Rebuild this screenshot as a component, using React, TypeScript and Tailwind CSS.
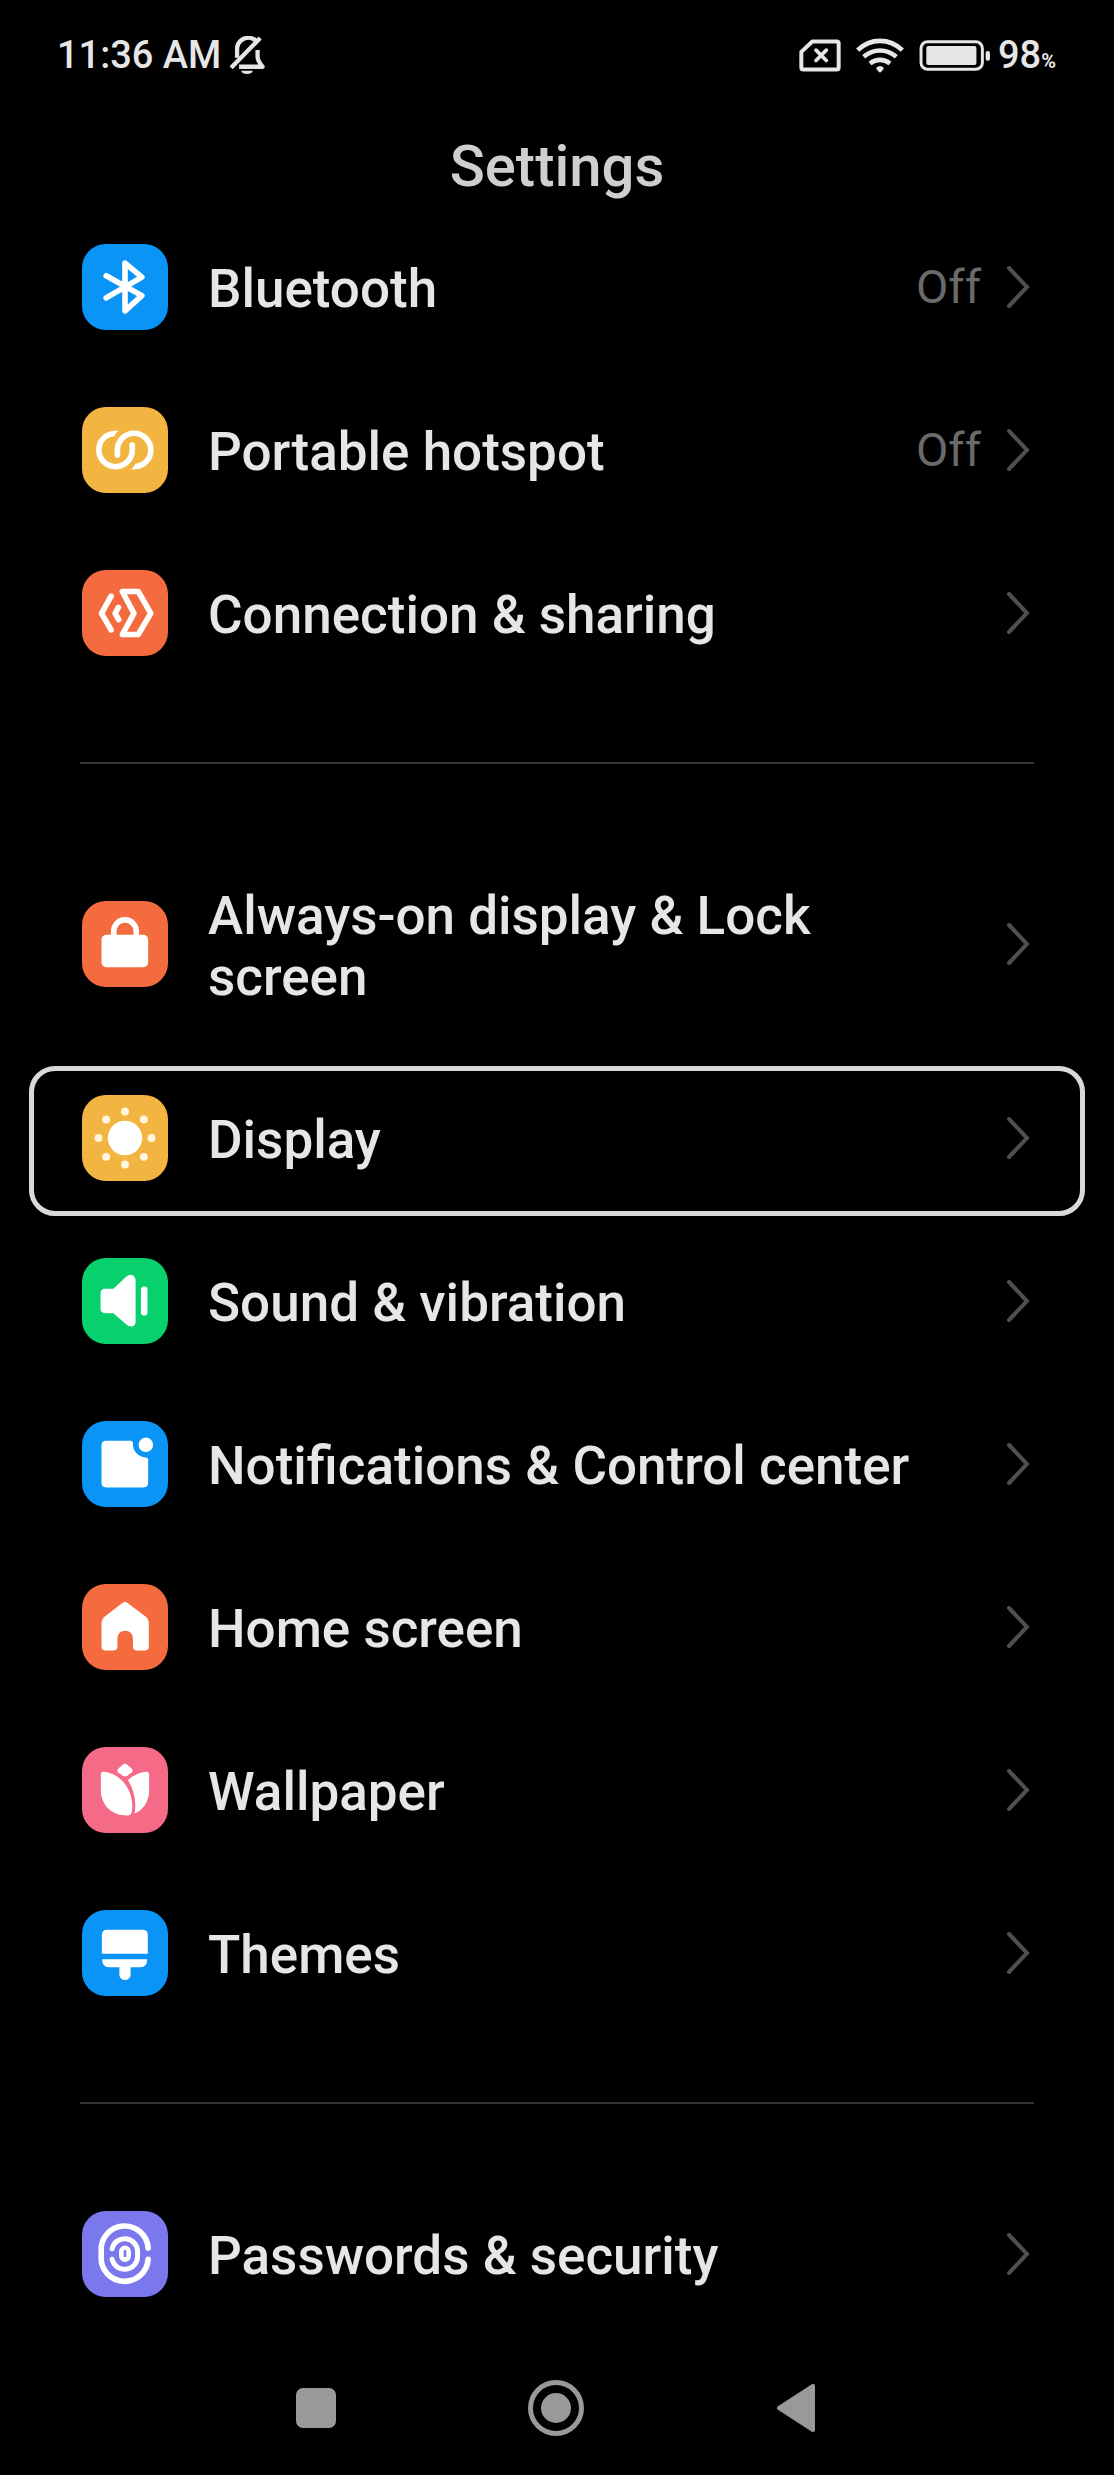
import type { ReactNode } from "react";

type Item = {
  label: string;
  tile: string;
  glyph: ReactNode;
  value?: string;
  focused?: boolean;
};

const stroke = {
  fill: "none",
  stroke: "currentColor",
  strokeWidth: 17,
  strokeLinecap: "round",
  strokeLinejoin: "round",
} as const;

const bluetooth = <path {...stroke} d="M73 96L181 156L130 202V58L181 100L73 163" />;

const hotspotHalf = (
  <>
    <path
      {...stroke}
      strokeLinecap="butt"
      d="M98 80C70 82 51 103 51 130A50.500 50.500 0 0 0 152 130V114"
    />
    <path d="M96 71.500L111 71Q103 77 96 89Z" />
    <circle cx="152" cy="115" r="8.500" />
  </>
);

const hotspot = (
  <>
    <g>{hotspotHalf}</g>
    <g transform="rotate(180 129.500 130)">{hotspotHalf}</g>
  </>
);

const connection = (
  <g {...stroke}>
    <path d="M88 79L59 131L88 181" />
    <path d="M110 113L100 131L111 150" />
    <path d="M122 65H170L208 131L170 195H122L157 131Z" />
  </g>
);

const lock = (
  <>
    <rect x="59" y="102" width="141" height="98" rx="15" />
    <path {...stroke} strokeLinecap="butt" d="M96 106V91A34 34 0 0 1 164 91V106" />
  </>
);

const sunDots = [
  [130, 50],
  [187, 74],
  [210, 130],
  [187, 187],
  [130, 210],
  [73, 187],
  [50, 130],
  [73, 74],
];

const sun = (
  <>
    <circle cx="130" cy="130" r="52" />
    {sunDots.map(([x, y]) => (
      <circle key={`${x}-${y}`} cx={x} cy={y} r="12" fill="#fff6dc" />
    ))}
  </>
);

const speaker = (
  <>
    <path d="M70 93H95L134 56Q145 47 155 53Q162 57 162 68V192Q162 203 154 206Q144 210 134 201L95 167H70Q56 167 56 153V107Q56 93 70 93Z" />
    <rect x="178" y="86" width="20" height="88" rx="9" />
  </>
);

const notification = (
  <>
    <path d="M73 60H148Q154 60 154 68A40 40 0 0 0 192 110Q200 110 200 117V187Q200 201 186 201H73Q59 201 59 187V74Q59 60 73 60Z" />
    <circle cx="193" cy="72" r="22" />
  </>
);

const home = (
  <path d="M121 58Q130 51 139 58L194 100Q202 107 202 116V188Q202 201 189 201H166Q154 201 154 189V164A23.500 23 0 0 0 107 164V189Q107 201 95 201H72Q59 201 59 188V116Q59 107 67 100Z" />
);

const tulip = (
  <>
    <path d="M124 53Q130 48 136 53L151 66Q156 71 151 76L137 87Q130 92 123 87L109 76Q104 71 109 66Z" />
    <path d="M57 82Q57 74 66 75C118 80 162 134 150 199Q148 207 140 207C90 209 57 175 57 130Z" />
    <path d="M139 100Q165 77 193 75Q203 74 203 83V130C203 165 185 190 159 201Q168 148 139 100Z" />
  </>
);

const brush = (
  <>
    <path d="M60 132V76Q60 60 76 60H183Q199 60 199 76V132Z" />
    <path d="M61 149H197Q197 173 177 173H147V195A17 17 0 0 1 113 195V173H81Q61 173 61 149Z" />
  </>
);

const fingerprint = (
  <g {...stroke}>
    <path d="M200 112A71 71 0 0 0 58 121V137A71 71 0 0 0 200 146" />
    <path strokeWidth="15" d="M91 114A39 39 0 0 1 168 121V138A39 39 0 0 1 91 146" />
    <rect strokeWidth="14" x="119" y="111" width="22" height="36" rx="11" />
  </g>
);

const groups: Item[][] = [
  [
    { label: "Bluetooth", tile: "bg-[#0a94f5]", glyph: bluetooth, value: "Off" },
    { label: "Portable hotspot", tile: "bg-[#f3b541]", glyph: hotspot, value: "Off" },
    { label: "Connection & sharing", tile: "bg-[#f46b40]", glyph: connection },
  ],
  [
    { label: "Always-on display & Lock screen", tile: "bg-[#f46b40]", glyph: lock },
    { label: "Display", tile: "bg-[#f3b541]", glyph: sun, focused: true },
    { label: "Sound & vibration", tile: "bg-[#06d16c]", glyph: speaker },
    { label: "Notifications & Control center", tile: "bg-[#0a94f5]", glyph: notification },
    { label: "Home screen", tile: "bg-[#f46b40]", glyph: home },
    { label: "Wallpaper", tile: "bg-[#f56a86]", glyph: tulip },
    { label: "Themes", tile: "bg-[#0a94f5]", glyph: brush },
  ],
  [{ label: "Passwords & security", tile: "bg-[#7b78ee]", glyph: fingerprint }],
];

function MutedBell() {
  return (
    <svg viewBox="0 0 108 115" className="h-[38px] w-9" fill="none" stroke="currentColor" strokeWidth="13" aria-label="Muted" role="img">
      <path d="M6 96L94 6" />
      <path d="M24 66V40C24 14 48 2 66 6Q76 9 80 14" />
      <path d="M86 42V64Q87 76 101 93H30" strokeLinejoin="round" />
      <path d="M36 105H72Q68 115 54 115Q40 115 36 105Z" fill="currentColor" stroke="none" />
    </svg>
  );
}

function NoSim() {
  return (
    <svg viewBox="0 0 126 98" className="h-[33px] w-[42px]" fill="none" stroke="currentColor" strokeLinejoin="round" aria-label="No SIM" role="img">
      <path d="M40 7H113Q119 7 119 13V85Q119 91 113 91H13Q7 91 7 85V38Z" strokeWidth="12" />
      <path d="M51 33L82 64M82 33L51 64" strokeWidth="11" strokeLinecap="round" />
    </svg>
  );
}

function Wifi() {
  return (
    <svg viewBox="0 0 144 104" className="h-[35px] w-12" fill="none" stroke="currentColor" strokeWidth="14" aria-label="Wi-Fi" role="img">
      <path d="M5 36Q34 8 72 8T139 36" />
      <path d="M23 56Q45 37 72 37T121 56" />
      <path d="M42 76Q56 65 72 65T102 76" />
      <path d="M60 90Q72 77 84 90L76 101Q72 105 68 101Z" fill="currentColor" stroke="none" />
    </svg>
  );
}

function Battery() {
  return (
    <svg viewBox="0 0 216 94" className="h-[31px] w-[72px]" aria-hidden="true">
      <rect x="5" y="5" width="186" height="84" rx="20" fill="none" stroke="currentColor" strokeWidth="9" />
      <rect x="21" y="18" width="152" height="58" rx="6" fill="currentColor" />
      <rect x="201" y="33" width="13" height="30" rx="6" fill="currentColor" />
    </svg>
  );
}

function Row({ item }: { item: Item }) {
  return (
    <li className="relative">
      <button type="button" className="flex w-full items-center pr-[83px] pl-[82px] text-left">
        <span className={`flex size-[86px] shrink-0 overflow-hidden rounded-[24px] text-white ${item.tile}`}>
          <svg viewBox="0 0 260 260" className="size-full" fill="currentColor" aria-hidden="true">
            {item.glyph}
          </svg>
        </span>
        <span className="ml-10 flex-1 pt-[54px] pr-10 pb-12 text-[53px] leading-[61px] font-medium text-[#e6e6e6]">{item.label}</span>
        {item.value && <span className="mr-[26px] text-[47px] leading-[61px] text-[#6a6a6a]">{item.value}</span>}
        <svg viewBox="0 0 24 42" className="h-[42px] w-6 shrink-0" fill="none" stroke="#4f4f4f" strokeWidth="4" strokeLinecap="round" aria-hidden="true">
          <path d="M2 2L20 21L2 40" />
        </svg>
      </button>
      {item.focused && (
        <span className="pointer-events-none absolute inset-x-[29px] top-[10px] bottom-[3px] rounded-[26px] border-[5px] border-[#d9d9d9]" />
      )}
    </li>
  );
}

export default function App() {
  return (
    <div className="flex min-h-screen flex-col bg-black font-['Roboto',sans-serif] text-[#e6e6e6]">
      <div className="flex h-[110px] items-center justify-between pr-[58px] pl-[57px]">
        <div className="flex items-center gap-2">
          <span className="text-[38px] leading-[44px] font-medium">11:36 AM</span>
          <MutedBell />
        </div>
        <div className="flex items-center">
          <NoSim />
          <span className="ml-[15px] flex">
            <Wifi />
          </span>
          <span className="ml-[15px] flex">
            <Battery />
          </span>
          <span className="ml-[7px] flex items-baseline font-medium">
            <span className="text-[38px] leading-[44px]">98</span>
            <span className="text-[20px] font-bold">%</span>
          </span>
        </div>
      </div>
      <h1 className="h-[95px] pt-6 text-center text-[58px] leading-[64px] font-medium text-[#cfcfcf]">Settings</h1>
      <main className="flex-1">
        {groups.map((group, index) => (
          <section key={group[0].label}>
            {index > 0 && <hr className="mx-20 my-[68px] border-t-2 border-[#333]" />}
            <ul>
              {group.map((item) => (
                <Row key={item.label} item={item} />
              ))}
            </ul>
          </section>
        ))}
      </main>
      <nav className="flex h-[139px] items-center justify-center gap-[180px] pt-1 pr-0.5 text-[#999]" aria-label="System navigation">
        <button type="button" aria-label="Recent apps" className="flex size-[60px] items-center justify-center">
          <span className="size-10 rounded-[7px] bg-[#999]" />
        </button>
        <button type="button" aria-label="Home" className="flex size-[60px] items-center justify-center">
          <svg viewBox="0 0 56 56" className="size-14" aria-hidden="true">
            <circle cx="28" cy="28" r="25.500" fill="none" stroke="currentColor" strokeWidth="5" />
            <circle cx="28" cy="28" r="15" fill="currentColor" />
          </svg>
        </button>
        <button type="button" aria-label="Back" className="flex size-[60px] items-center justify-center">
          <svg viewBox="0 0 38 48" className="h-12 w-[38px]" fill="currentColor" stroke="currentColor" strokeWidth="4" strokeLinejoin="round" aria-hidden="true">
            <path d="M2 24L36 2V46Z" />
          </svg>
        </button>
      </nav>
    </div>
  );
}
